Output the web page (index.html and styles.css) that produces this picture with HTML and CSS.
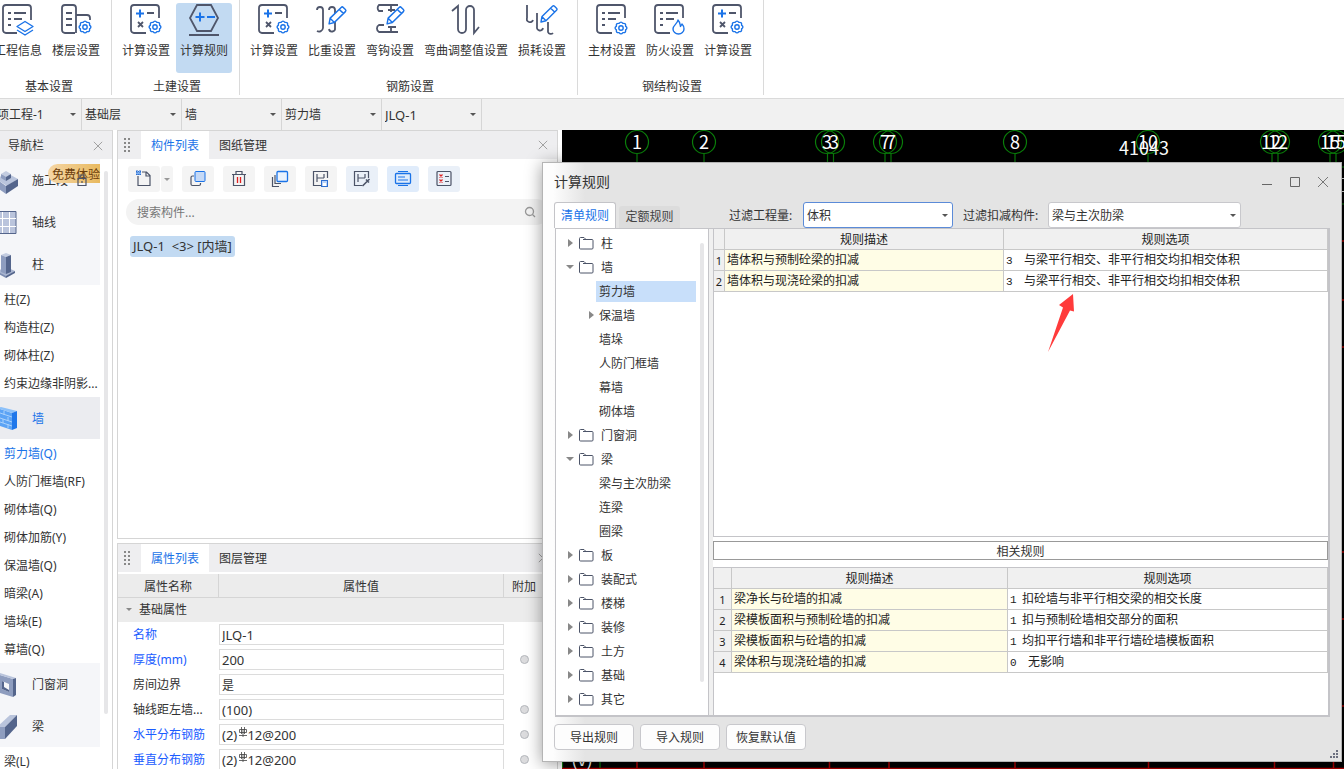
FILE: index.html
```html
<!DOCTYPE html>
<html lang="zh-CN">
<head>
<meta charset="utf-8">
<title>计算规则</title>
<link rel="stylesheet" href="styles.css">
</head>
<body>
<svg class="sprite" aria-hidden="true">
  <defs>
    <symbol id="gear" viewBox="-7 -7 14 14" overflow="visible"><g class="b"><path d="M4.6-1.9Q7.2 0 4.6 1.9 5.1 5.1 1.9 4.6 0 7.2-1.9 4.6-5.1 5.1-4.6 1.9-7.2 0-4.6-1.9-5.1-5.1-1.9-4.6 0-7.2 1.9-4.6 5.1-5.1 4.6-1.9z"/><circle r="2.2"/></g></symbol>
    <symbol id="pencil" viewBox="0 0 20 20"><g class="b"><path class="w" d="M2 18l1-5.500L13.500 2.300q1-1 2 0l2 2q1 1 0 2L7 16.700zM3 12.700l4 4M11.700 4.200l4.200 4"/></g></symbol>
    <symbol id="i-info" viewBox="0 0 32 32"><g class="d"><path d="M15 29H4a3 3 0 0 1-3-3V4a3 3 0 0 1 3-3h22a3 3 0 0 1 3 3v12M6 9h3M12 9h12M6 15h3M12 15h8M6 21h3"/></g><g class="b"><path d="M15 22.500l8-5 8 5-8 5zM15 26l8 5 8-5"/></g></symbol>
    <symbol id="i-floor" viewBox="0 0 32 32"><g class="d"><path d="M15 29H5a3 3 0 0 1-3-3V4a3 3 0 0 1 3-3h8a3 3 0 0 1 3 3v25M16 11h11a3 3 0 0 1 3 3v2M6 9h6M6 15h6M6 21h6"/></g><circle cx="25" cy="23" r="8" fill="#fff"/><use href="#gear" x="18" y="16" width="14" height="14"/></symbol>
    <symbol id="i-calc" viewBox="0 0 32 32"><g class="d"><path d="M16 29H4a3 3 0 0 1-3-3V4a3 3 0 0 1 3-3h22a3 3 0 0 1 3 3v10M17 9h7M8 18l5 5M13 18l-5 5"/></g><path class="plus" d="M10 5.500v8M6 9.500h8"/><use href="#gear" x="18" y="16" width="14" height="14"/></symbol>
    <symbol id="i-rule" viewBox="0 0 32 32"><g class="d"><path d="M9 1h14l7 13-7 13H9L2 14zM1 31h30"/></g><path class="plus" d="M12 8.500v9M7.500 13h9M19 13h8"/></symbol>
    <symbol id="i-weight" viewBox="0 0 32 32"><g class="d"><path d="M1 6a3 3 0 0 1 6 0v18a4 4 0 0 1-6 3M13 6a3 3 0 0 1 6 0v18a3 3 0 0 1-6 1"/></g><use href="#pencil" x="11" y="1" width="21" height="21"/></symbol>
    <symbol id="i-hook" viewBox="0 0 32 32"><g class="d"><path d="M24 1H5a4 4 0 0 0 0 6h4M17 2v6M14 6h7M24 28H5a4 4 0 0 1 0-7h5M17 28v-5M14 23h8"/></g><use href="#pencil" x="11" y="1" width="21" height="21"/></symbol>
    <symbol id="i-bend" viewBox="0 0 32 32"><g class="d"><path d="M2 7l6-5v23a4 4 0 0 0 8 0V6a4 4 0 0 1 8 0v23l5-6"/></g></symbol>
    <symbol id="i-loss" viewBox="0 0 32 32"><g class="d"><path d="M1 1v13a3 3 0 0 0 6 2M11 9v14a3 3 0 0 0 6 1M22 18v10a3 3 0 0 0 5 1"/></g><use href="#pencil" x="13" y="0" width="20" height="20"/></symbol>
    <symbol id="i-material" viewBox="0 0 32 32"><g class="d"><path d="M16 29H4a3 3 0 0 1-3-3V4a3 3 0 0 1 3-3h22a3 3 0 0 1 3 3v10M6 9h3M12 9h12M6 15h3M12 15h8M6 21h3"/></g><use href="#gear" x="18" y="17" width="14" height="14"/></symbol>
    <symbol id="i-fire" viewBox="0 0 32 32"><g class="d"><path d="M16 29H4a3 3 0 0 1-3-3V4a3 3 0 0 1 3-3h22a3 3 0 0 1 3 3v10M6 9h3M12 9h12M6 15h3M12 15h8M6 21h3"/></g><g class="b"><path d="M24 16c-.5 4-5 5-5 9a5.500 5 0 0 0 11 0c0-2-1-4-2-5l-1.500 2.500C26 20 26 18 24 16z"/></g></symbol>
    <symbol id="i-close" viewBox="0 0 12 12"><path d="M1 1l10 10M11 1L1 11" fill="none" stroke="currentColor" stroke-width="1.100"/></symbol>
    <symbol id="i-grip" viewBox="0 0 8 14"><path d="M0 1h2M4 1h2M0 5h2M4 5h2M0 9h2M4 9h2M0 13h2M4 13h2" stroke="#888" stroke-width="2"/></symbol>
    <symbol id="i-folder" viewBox="0 0 15 13"><path d="M.5 11V1.500q0-1 1-1H5L7 2.500h6q1 0 1 1V11q0 1-1 1H1.500q-1 0-1-1zM7 2.500H4" fill="none" stroke="#4c5468"/></symbol>
    <symbol id="i-rebar" viewBox="0 0 10 10"><path d="M3.500 0v7M6.500 0v7M5 2v8M1 8.500h8M1.500 2.500h7v3h-7z" fill="none" stroke="#444" stroke-width=".8"/></symbol>
    <symbol id="t-new" viewBox="0 0 18 18"><path d="M3 6v9.500h12V5.500L11.500 2H7M11 2v4h4" class="t"/><path d="M1 1h5v4H1z" fill="#7fb0ee"/><path d="M1 1.500h5M1 4.500h5M2 0v5M5 0v5" stroke="#2f6fd0" stroke-dasharray="1 1"/></symbol>
    <symbol id="t-copy" viewBox="0 0 18 18"><path d="M5 6H3.500Q2 6 2 7.500V14q0 1.500 1.500 1.500H10q1.500 0 1.500-1.500v-1" class="t"/><rect x="6" y="1.500" width="10" height="10" rx="1" fill="#c5d9f6" stroke="#1a73e8"/></symbol>
    <symbol id="t-trash" viewBox="0 0 18 18"><path d="M2 4.500h14M6 4V1.500h6V4M3.500 5v10.500h11V5" class="t"/><path d="M7.500 7v6M10.500 7v6" stroke="#e02020" stroke-width="1.300"/></symbol>
    <symbol id="t-layers" viewBox="0 0 18 18"><path d="M1.500 7v9.500H8M4 5v8.500h6" class="t"/><rect x="6" y="1.500" width="10.500" height="10" rx="1" fill="#eaf2fd" stroke="#1a73e8" stroke-width="1.300"/></symbol>
    <symbol id="t-save" viewBox="0 0 18 18"><path d="M9 15.500H1.500v-14h14V8M5 4v8M5 8h7M12 4v4" class="t"/><rect x="9.500" y="10.500" width="6" height="6" fill="#b9d4fa" stroke="#2f6fd0"/><path d="M11 13h3v3h-3z" fill="#fff"/></symbol>
    <symbol id="t-pick" viewBox="0 0 18 18"><path d="M9 15.500H1.500v-14h14V8M5 4v8M5 8h7M12 4v4" class="t"/><path d="M9.500 16l5-5M13 9.500l3 3M14.500 11l2-2" stroke="#4c5468" stroke-width="1.600"/></symbol>
    <symbol id="t-list" viewBox="0 0 18 18"><rect x="1.500" y="3.500" width="15" height="10" rx="1" fill="none" stroke="#1a73e8" stroke-width="1.300"/><path d="M4 7h7M4 10h10M4 1.500h10M4 15.500h10" stroke="#1a73e8"/></symbol>
    <symbol id="t-check" viewBox="0 0 18 18"><rect x="2" y="1.500" width="14" height="14" rx="1" class="t"/><path d="M10 6.500h4M10 11.500h4" class="t"/><path d="M4.500 4.500l3 3M7.500 4.500l-3 3M4.500 9.500l3 3M7.500 9.500l-3 3" stroke="#e02020" stroke-width="1.200"/></symbol>
  </defs>
</svg>

<div class="app">
  <header class="ribbon">
    <section class="group">
      <div class="tools">
        <button class="tool"><svg><use href="#i-info"/></svg>工程信息</button>
        <button class="tool"><svg><use href="#i-floor"/></svg>楼层设置</button>
      </div>
      <h2>基本设置</h2>
    </section>
    <section class="group">
      <div class="tools">
        <button class="tool"><svg><use href="#i-calc"/></svg>计算设置</button>
        <button class="tool active"><svg><use href="#i-rule"/></svg>计算规则</button>
      </div>
      <h2>土建设置</h2>
    </section>
    <section class="group">
      <div class="tools">
        <button class="tool"><svg><use href="#i-calc"/></svg>计算设置</button>
        <button class="tool"><svg><use href="#i-weight"/></svg>比重设置</button>
        <button class="tool"><svg><use href="#i-hook"/></svg>弯钩设置</button>
        <button class="tool wide"><svg><use href="#i-bend"/></svg>弯曲调整值设置</button>
        <button class="tool"><svg><use href="#i-loss"/></svg>损耗设置</button>
      </div>
      <h2>钢筋设置</h2>
    </section>
    <section class="group">
      <div class="tools">
        <button class="tool"><svg><use href="#i-material"/></svg>主材设置</button>
        <button class="tool"><svg><use href="#i-fire"/></svg>防火设置</button>
        <button class="tool"><svg><use href="#i-calc"/></svg>计算设置</button>
      </div>
      <h2>钢结构设置</h2>
    </section>
  </header>

  <nav class="pathbar">
    <span class="combo"><select aria-label="工程"><option>单项工程-1</option></select></span>
    <span class="combo"><select aria-label="楼层"><option>基础层</option></select></span>
    <span class="combo"><select aria-label="构件大类"><option>墙</option></select></span>
    <span class="combo"><select aria-label="构件类型"><option>剪力墙</option></select></span>
    <span class="combo"><select class="latin" aria-label="构件"><option>JLQ-1</option></select></span>
  </nav>

  <main class="workspace">
    <aside class="nav">
      <div class="nav-head">导航栏<button class="close" aria-label="关闭"><svg><use href="#i-close"/></svg></button></div>
      <div class="nav-body">
        <ul class="nav-list">
          <li class="cat"><svg viewBox="0 0 20 28"><path d="M-4 12l11-6 11 6-11 7z" fill="#b9c4dc"/><path d="M-4 12l10 7v8L-4 20z" fill="#8e9dbf"/><path d="M6 19l12-7v7L6 27z" fill="#54658c"/><path d="M1 7l5-3 5 3-5 3z" fill="#c3cce0"/><path d="M1 7l5 3v4l-5-3z" fill="#8e9dbf"/><path d="M6 10l5-3v4l-5 3z" fill="#54658c"/></svg>施工段
            <span class="trial">免费体验</span>
            <svg class="lock" viewBox="0 0 10 12"><path d="M1 4.500h8v7H1zM3 4V1h4v3M5 7v2" fill="none" stroke="#4c5468" stroke-width="1.200"/></svg></li>
          <li class="cat"><svg viewBox="0 0 20 28"><path d="M-2 2.500h18v22H-2z" fill="#bac4dc" stroke="#54658c"/><path d="M2.500 3v21M9.500 3v21M0 9.500h16M0 17.500h16" stroke="#fff"/></svg>轴线</li>
          <li class="cat"><svg viewBox="0 0 20 28"><path d="M-3 20l9-4 9 4-9 6z" fill="#a9b5d0"/><path d="M6 25l9-5v2l-9 5z" fill="#54658c"/><path d="M-3 20l9 5v2l-9-5z" fill="#7d8db2"/><path d="M1 4l5-2 5 2-5 2z" fill="#c3cce0"/><path d="M1 4l5 2v17l-5-2z" fill="#8e9dbf"/><path d="M6 6l5-2v17l-5 2z" fill="#54658c"/></svg>柱</li>
          <li>柱(Z)</li>
          <li>构造柱(Z)</li>
          <li>砌体柱(Z)</li>
          <li>约束边缘非阴影...</li>
          <li class="cat current"><svg viewBox="0 0 20 28"><path d="M-3 3l15 5v17L-3 20z" fill="#5ba3f5"/><path d="M-3 3l4-1 16 4-5 2z" fill="#8cc1fa"/><path d="M12 8l5-2v17l-5 2z" fill="#1f77ea"/><path d="M-3 7l15 5M-3 12l15 5M-3 16l15 5M4 6v4M8 12v4M3 14v4M8 19v4" stroke="#a9d1fb" fill="none"/></svg>墙</li>
          <li class="picked">剪力墙(Q)</li>
          <li>人防门框墙(RF)</li>
          <li>砌体墙(Q)</li>
          <li>砌体加筋(Y)</li>
          <li>保温墙(Q)</li>
          <li>暗梁(A)</li>
          <li>墙垛(E)</li>
          <li>幕墙(Q)</li>
          <li class="cat"><svg viewBox="0 0 20 28"><path d="M-3 3l16 5v18l-16-5zM2 10v8l7 3v-8z" fill="#8e9dbf" fill-rule="evenodd"/><path d="M-3 3l3-1 16 5-3 1z" fill="#b9c4dc"/><path d="M13 8l3-1v17l-3 2z" fill="#54658c"/><path d="M2 10l2 1v5l5 3v2l-7-3z" fill="#54658c"/></svg>门窗洞</li>
          <li class="cat"><svg viewBox="0 0 20 28"><path d="M-3 14L10 2h7L5 14z" fill="#b9c4dc"/><path d="M-3 14h8v12h-8z" fill="#8e9dbf"/><path d="M5 14L17 2v11L5 26z" fill="#54658c"/></svg>梁</li>
          <li>梁(L)</li>
        </ul>
        <div class="scroll"></div>
      </div>
    </aside>

    <div class="docks">
      <section class="panel grow">
        <div class="tabs">
          <svg class="grip"><use href="#i-grip"/></svg>
          <button class="tab on">构件列表</button><button class="tab">图纸管理</button>
          <button class="close" aria-label="关闭"><svg><use href="#i-close"/></svg></button>
        </div>
        <div class="toolbar">
          <span class="split"><button aria-label="新建"><svg><use href="#t-new"/></svg></button><button class="drop" aria-label="更多"></button></span>
          <button aria-label="复制"><svg><use href="#t-copy"/></svg></button>
          <button aria-label="删除"><svg><use href="#t-trash"/></svg></button>
          <button aria-label="层间复制"><svg><use href="#t-layers"/></svg></button>
          <button aria-label="存盘"><svg><use href="#t-save"/></svg></button>
          <button class="lit" aria-label="提取"><svg><use href="#t-pick"/></svg></button>
          <button class="hot" aria-label="列表"><svg><use href="#t-list"/></svg></button>
          <button class="lit" aria-label="检查"><svg><use href="#t-check"/></svg></button>
        </div>
        <div class="search">
          <input type="text" placeholder="搜索构件..." aria-label="搜索构件">
          <svg viewBox="0 0 12 12"><circle cx="5.500" cy="5.500" r="4" fill="none" stroke="#999" stroke-width="1.300"/><path d="M8.500 8.500L11 11" stroke="#999" stroke-width="1.300"/></svg>
        </div>
        <span class="component">JLQ-1&nbsp; &lt;3&gt; [内墙]</span>
      </section>

      <section class="panel props">
        <div class="tabs">
          <svg class="grip"><use href="#i-grip"/></svg>
          <button class="tab on">属性列表</button><button class="tab">图层管理</button>
          <button class="close" aria-label="关闭"><svg><use href="#i-close"/></svg></button>
        </div>
        <table class="ptable">
          <colgroup><col class="c-name"><col><col class="c-add"></colgroup>
          <thead><tr><th>属性名称</th><th>属性值</th><th>附加</th></tr></thead>
          <tbody>
            <tr class="section"><td colspan="3">基础属性</td></tr>
            <tr><td class="key"><label for="p1">名称</label></td><td><input type="text" id="p1" value="JLQ-1"></td><td></td></tr>
            <tr><td class="key"><label for="p2">厚度(mm)</label></td><td><input type="text" id="p2" value="200"></td><td><input type="radio" aria-label="附加厚度"></td></tr>
            <tr><td><label for="p3">房间边界</label></td><td><input type="text" class="han" id="p3" value="是"></td><td></td></tr>
            <tr><td><label for="p4">轴线距左墙...</label></td><td><input type="text" id="p4" value="(100)"></td><td><input type="radio" aria-label="附加轴线距"></td></tr>
            <tr><td class="key"><label for="p5">水平分布钢筋</label></td><td><input type="text" id="p5" value="(2)   12@200"><svg class="rebar"><use href="#i-rebar"/></svg></td><td><input type="radio" aria-label="附加水平钢筋"></td></tr>
            <tr><td class="key"><label for="p6">垂直分布钢筋</label></td><td><input type="text" id="p6" value="(2)   12@200"><svg class="rebar"><use href="#i-rebar"/></svg></td><td><input type="radio" aria-label="附加垂直钢筋"></td></tr>
          </tbody>
        </table>
      </section>
    </div>

    <div class="canvas">
      <svg>
        <g transform="translate(-562 -130)">
          <g class="axis">
            <circle cx="637" cy="142" r="11.500"/><circle cx="704" cy="142" r="11.500"/>
            <circle cx="827" cy="142" r="11.500"/><circle cx="833" cy="142" r="11.500"/>
            <circle cx="885" cy="142" r="11.500"/><circle cx="891" cy="142" r="11.500"/>
            <circle cx="1015" cy="142" r="11.500"/><circle cx="1148" cy="142" r="11.500"/>
            <circle cx="1272" cy="142" r="11.500"/><circle cx="1278" cy="142" r="11.500"/>
            <circle cx="1330" cy="142" r="11.500"/><circle cx="1336" cy="142" r="11.500"/>
            <path d="M637 154v9M704 154v9M827.500 154v9M833.500 154v9M885 154v9M891 154v9M1015 154v9M1148 154v9M1272 154v9M1278 154v9M1330 154v9M1336 154v9M562.500 761v8M600 761v8M1342 167h2M1342 204h2"/>
          </g>
          <path class="beam" d="M637 761v8M704 761v8M829.500 761v8M889 761v8M1015 761v8M1148.500 761v8M1274.500 761v8M1333.500 761v8M562 768.500h782M1342 241h2M1342 300h2M1342 347h2M1342 552h2M1342 619h2M1342 706h2"/>
          <path class="wall" d="M1342 178.500h2M1342 191.500h2"/>
          <g class="marks">
            <text x="637" y="149">1</text><text x="704" y="149">2</text>
            <text x="827" y="149">3</text><text x="834" y="149">3</text>
            <text x="885" y="149">7</text><text x="891" y="149">7</text>
            <text x="1015" y="149">8</text><text x="1148" y="149">10</text><text x="1144" y="155">41043</text>
            <text x="1271" y="149">12</text><text x="1278" y="149">12</text>
            <text x="1330" y="149">15</text><text x="1336" y="149">15</text>
            <text x="582" y="766">(v)</text>
          </g>
        </g>
      </svg>
    </div>
  </main>
</div>

<section class="dialog" role="dialog" aria-labelledby="dlg-title">
  <header class="titlebar">
    <h1 id="dlg-title">计算规则</h1>
    <button aria-label="最小化"><svg viewBox="0 0 12 12"><path d="M1 8.500h10" stroke="#666"/></svg></button>
    <button aria-label="最大化"><svg viewBox="0 0 12 12"><path d="M1.500 1.500h9v9h-9z" fill="none" stroke="#666"/></svg></button>
    <button aria-label="关闭"><svg viewBox="0 0 12 12"><path d="M1 1l10 10M11 1L1 11" stroke="#777"/></svg></button>
  </header>
  <div class="filters">
    <button class="rtab on">清单规则</button><button class="rtab">定额规则</button>
    <label class="f1" for="qty">过滤工程量:</label>
    <span class="pick focus"><select id="qty"><option>体积</option></select></span>
    <label class="f2" for="comp">过滤扣减构件:</label>
    <span class="pick long"><select id="comp"><option>梁与主次肋梁</option></select></span>
  </div>
  <div class="frame">
    <div class="tree">
      <ul>
        <li><i class="shut"></i><svg><use href="#i-folder"/></svg>柱</li>
        <li><i class="open"></i><svg><use href="#i-folder"/></svg>墙</li>
        <li class="sub"><span class="sel">剪力墙</span></li>
        <li class="sub"><i class="shut"></i>保温墙</li>
        <li class="sub">墙垛</li>
        <li class="sub">人防门框墙</li>
        <li class="sub">幕墙</li>
        <li class="sub">砌体墙</li>
        <li><i class="shut"></i><svg><use href="#i-folder"/></svg>门窗洞</li>
        <li><i class="open"></i><svg><use href="#i-folder"/></svg>梁</li>
        <li class="sub">梁与主次肋梁</li>
        <li class="sub">连梁</li>
        <li class="sub">圈梁</li>
        <li><i class="shut"></i><svg><use href="#i-folder"/></svg>板</li>
        <li><i class="shut"></i><svg><use href="#i-folder"/></svg>装配式</li>
        <li><i class="shut"></i><svg><use href="#i-folder"/></svg>楼梯</li>
        <li><i class="shut"></i><svg><use href="#i-folder"/></svg>装修</li>
        <li><i class="shut"></i><svg><use href="#i-folder"/></svg>土方</li>
        <li><i class="shut"></i><svg><use href="#i-folder"/></svg>基础</li>
        <li><i class="shut"></i><svg><use href="#i-folder"/></svg>其它</li>
      </ul>
      <div class="scroll"></div>
    </div>
    <div class="rules">
      <div class="sheet top">
        <table>
          <colgroup><col class="n1"><col class="desc1"><col></colgroup>
          <thead><tr><th></th><th>规则描述</th><th>规则选项</th></tr></thead>
          <tbody>
            <tr><th>1</th><td>墙体积与预制砼梁的扣减</td><td><b>3</b>与梁平行相交、非平行相交均扣相交体积</td></tr>
            <tr><th>2</th><td>墙体积与现浇砼梁的扣减</td><td><b>3</b>与梁平行相交、非平行相交均扣相交体积</td></tr>
          </tbody>
        </table>
        <svg class="pointer" viewBox="0 0 28 60"><path d="M26 1l1 17.500-4-1L1 59 16 14.500 12 12z" fill="#ff3b3b"/></svg>
      </div>
      <div class="related">相关规则</div>
      <div class="sheet bottom">
        <table>
          <colgroup><col class="n2"><col class="desc2"><col></colgroup>
          <thead><tr><th></th><th>规则描述</th><th>规则选项</th></tr></thead>
          <tbody>
            <tr><th>1</th><td>梁净长与砼墙的扣减</td><td><b class="near">1</b>扣砼墙与非平行相交梁的相交长度</td></tr>
            <tr><th>2</th><td>梁模板面积与预制砼墙的扣减</td><td><b class="near">1</b>扣与预制砼墙相交部分的面积</td></tr>
            <tr><th>3</th><td>梁模板面积与砼墙的扣减</td><td><b class="near">1</b>均扣平行墙和非平行墙砼墙模板面积</td></tr>
            <tr><th>4</th><td>梁体积与现浇砼墙的扣减</td><td><b>0</b>无影响</td></tr>
          </tbody>
        </table>
      </div>
    </div>
  </div>
  <footer class="actions">
    <button>导出规则</button><button>导入规则</button><button>恢复默认值</button>
    <svg class="resize" viewBox="0 0 8 8"><path d="M6 1h2M3 4h2M6 4h2M0 7h2M3 7h2M6 7h2" stroke="#6b7080" stroke-width="2"/></svg>
  </footer>
</section>
</body>
</html>
```
FILE: styles.css
```css
* { box-sizing: border-box; }
body, button, input, select {
  font-family: "Noto Sans", "Noto Sans CJK SC", sans-serif;
  font-size: 12px;
  line-height: 16px;
  color: #333;
}
body { margin: 0; background: #fff; overflow: hidden; }
button { border: 0; padding: 0; background: none; }
ul { list-style: none; margin: 0; padding: 0; }
h1, h2 { margin: 0; font-weight: 400; }
.sprite { position: absolute; width: 0; height: 0; }

.app { display: flex; flex-direction: column; height: 100vh; overflow: hidden; }

/* ribbon */
.ribbon { display: flex; flex: none; padding-bottom: 3px; border-bottom: 1px solid #dadada; margin-left: -16px; }
.group { padding: 3px 7px 0 6px; border-right: 1px solid #dadada; }
.group h2 { font-size: 12px; text-align: center; margin: 6px 0 0 4px; }
.tools { display: flex; gap: 2px; }
.tool { display: flex; flex-direction: column; align-items: center; gap: 7px; width: 56px; height: 70px; padding-top: 1px; border-radius: 3px; white-space: nowrap; }
.tool.wide { width: 92px; }
.tool.active { background: #c2daf2; }
.tool svg { width: 32px; height: 32px; flex: none; }
.d { fill: none; stroke: #4f566b; stroke-width: 1.8; }
.b { fill: none; stroke: #1a73e8; stroke-width: 1.4; stroke-linejoin: round; }
.w { fill: #fff; }
.t { fill: none; stroke: #4c5468; stroke-width: 1.2; }
.plus { fill: none; stroke: #1a73e8; stroke-width: 2; }

/* path bar */
.pathbar { display: flex; flex: none; height: 31px; padding-right: 8px; margin-left: -18px; background: #f1f1f1; }
.combo { position: relative; width: 100px; border-right: 1px solid #d6d6d6; }
.combo select { width: 100%; height: 31px; padding: 0 0 0 3px; border: 0; background: none; appearance: none; }
.combo .latin { font-size: 13px; }
.combo::after, .pick::after, .drop::after {
  content: ""; position: absolute; right: 5px; top: 14px;
  border: 3px solid transparent; border-top-color: #555; border-bottom: 0;
}

/* workspace */
.workspace { flex: 1; min-height: 0; display: grid; grid-template-columns: 113px 441px 1fr; column-gap: 4px; }
.nav { border-right: 1px solid #d5d5d5; border-top: 1px solid #dadada; overflow: hidden; }
.nav-head { display: flex; align-items: center; justify-content: space-between; height: 28px; padding: 2px 9px 0 8px; background: #eeeef0; }
.close { display: flex; color: #999; }
.close svg { width: 10px; height: 10px; }
.nav-body { display: flex; gap: 4px; }
.nav-list { width: 100px; flex: none; }
.nav-list li { height: 28px; padding: 1px 0 0 4px; line-height: 28px; white-space: nowrap; }
.nav-list .cat { position: relative; display: flex; align-items: center; gap: 12px; height: 42px; padding: 2px 0 0; background: #f5f6f9; }
.cat svg { width: 20px; height: 28px; flex: none; }
.nav-list .current { background: #ebecf0; color: #1a73e8; }
.picked { color: #1a73e8; }
.trial { position: absolute; left: 48px; right: 0; top: 5px; height: 19px; padding-left: 4px; line-height: 21px; border-radius: 10px 0 0 10px; background: linear-gradient(90deg, #f5d6a6, #e8b95f); color: #6b3d0c; }
.cat .lock { position: absolute; left: 77px; top: 15px; width: 10px; height: 12px; }
.scroll { width: 4px; border-radius: 2px; background: #e6e6e8; }
.nav-body .scroll { height: 543px; margin-top: 12px; }

.docks { display: flex; flex-direction: column; gap: 4px; min-height: 0; }
.panel { border: 1px solid #d5d5d5; overflow: hidden; }
.grow { flex: 1; }
.props { height: 226px; flex: none; border-bottom: 0; }
.tabs { display: flex; align-items: stretch; height: 28px; padding: 0 9px 0 6px; background: #eeeef0; }
.grip { width: 8px; height: 14px; margin: 7px 9px 0 0; }
.tab { padding: 2px 10px 0; }
.tab.on { background: #fff; color: #1a73e8; }
.tabs .close { align-items: center; margin-left: auto; }

.toolbar { display: flex; gap: 9px; padding: 7px 10px; }
.toolbar button { display: flex; align-items: center; justify-content: center; width: 32px; height: 26px; border-radius: 3px; background: #f4f4f4; }
.toolbar svg { width: 18px; height: 18px; }
.toolbar .lit { background: #eaf0f8; }
.toolbar .hot { background: #e0ecfb; }
.split { display: flex; gap: 1px; }
.toolbar .drop { position: relative; width: 12px; }
.toolbar .drop::after { right: 3px; top: 12px; border-top-color: #999; }
.search { display: flex; align-items: center; height: 26px; margin: 0 8px; padding: 0 12px 0 11px; border-radius: 13px; background: #f3f3f3; }
.search input { flex: 1; border: 0; padding: 2px 0 0; background: none; outline: 0; }
.search input::placeholder { color: #777; }
.search svg { width: 12px; height: 12px; margin-right: 1px; }
.component { display: inline-block; margin: 11px 12px; padding: 0 3px; font-size: 13px; line-height: 21px; border-radius: 3px; background: #c2daf2; }

.ptable { width: 426px; margin-top: 2px; border-collapse: separate; border-spacing: 0; table-layout: fixed; }
.c-name { width: 101px; }
.c-add { width: 40px; }
.ptable th { height: 24px; padding: 2px 0 0; font-weight: 400; background: #ececec; border-right: 1px solid #d5d5d5; border-bottom: 1px solid #d5d5d5; }
.ptable th:last-child { border-right: 0; }
.ptable td { position: relative; height: 25px; padding: 0 0 0 15px; white-space: nowrap; }
.ptable td + td { padding: 0; }
.ptable td:last-child { text-align: center; }
.ptable .section td { height: 24px; padding-left: 21px; text-align: left; background: #ececec; }
.section td::before { content: ""; position: absolute; left: 8px; top: 10px; border: 3px solid transparent; border-top-color: #888; border-bottom: 0; }
.key { color: #1a5cff; }
.key label { color: inherit; }
.ptable label { display: block; padding-top: 1px; }
.ptable input[type="text"] { display: block; width: 100%; height: 21px; padding: 0 2px; border: 1px solid #dcdcdc; font-size: 13px; }
.ptable .han[type="text"] { font-size: 12px; }
.ptable input[type="radio"] { appearance: none; display: block; width: 9px; height: 9px; margin: 0 auto; border: 1px solid #b5b8bd; border-radius: 50%; background: #dcdcde; }
.rebar { position: absolute; left: 19px; top: 5px; width: 10px; height: 10px; }

.canvas { background: #000; overflow: hidden; }
.canvas svg { display: block; width: 100%; height: 100%; }
.axis { fill: none; stroke: #0a7d0a; stroke-width: 1.2; }
.beam { fill: none; stroke: #b00000; stroke-width: 1.5; }
.wall { stroke: #ddd; }
.marks { fill: #fff; font-family: "Noto Sans CJK SC", sans-serif; font-size: 18px; text-anchor: middle; }

/* dialog */
.dialog {
  position: absolute; left: 542px; right: 2px; top: 162px; bottom: 7px;
  display: flex; flex-direction: column;
  border: 1px solid #b4b4b4;
  background: linear-gradient(90deg, #fdfdfd 10px, #e4e4e4 42px);
  box-shadow: 0 2px 16px rgba(0, 0, 0, .4);
}
.titlebar { display: flex; align-items: center; gap: 16px; height: 38px; padding: 0 12px 0 11px; }
.titlebar h1 { flex: 1; font-size: 14px; }
.titlebar button { display: flex; }
.titlebar svg { width: 12px; height: 12px; }
.filters { display: flex; align-items: center; height: 27px; padding-left: 11px; }
.rtab { align-self: flex-end; height: 22px; width: 61px; margin-left: 3px; color: #444; background: #dcdcdc; border-radius: 3px 3px 0 0; }
.rtab.on { height: 26px; width: 62px; margin: 0; padding-top: 1px; color: #1a73e8; background: #fff; border: 1px solid #c4c4c8; border-bottom: 0; }
.f1, .f2 { padding-top: 2px; white-space: nowrap; }
.f1 { margin: 0 10px 0 49px; width: 64px; }
.f2 { margin: 0 10px; width: 75px; }
.pick { position: relative; width: 150px; }
.pick.long { width: 193px; }
.pick select { display: block; width: 100%; height: 26px; padding: 2px 3px 0; border: 1px solid #c8c8cc; border-radius: 3px; background: #fff; appearance: none; }
.pick.focus select { border-color: #5b8bd8; }
.pick::after { top: 12px; right: 5px; }

.frame { flex: 1; min-height: 0; display: flex; gap: 4px; margin: 0 11px 0 12px; border: 1px solid #c4c4c8; border-width: 1px 2px 2px 1px; background: #f0f0f0; }
.tree { display: flex; justify-content: space-between; width: 153px; flex: none; padding: 2px 4px 0 0; border-right: 1px solid #c4c4c8; background: #fff; overflow: hidden; }
.tree ul { flex: 1; }
.tree li { display: flex; align-items: center; height: 24px; padding: 2px 0 0 10px; white-space: nowrap; }
.tree li svg { width: 15px; height: 13px; margin: -2px 7px 0 5px; }
.tree i { flex: none; width: 8px; margin-top: -2px; display: flex; }
.tree i::before { content: ""; border: 4px solid transparent; }
.tree .shut::before { border-left-color: #888; border-right: 0; border-width: 4px 0 4px 5px; margin-left: 2px; }
.tree .open::before { border-top-color: #888; border-bottom: 0; }
.tree .sub { padding-left: 43px; }
.tree .sub i { margin-left: -12px; width: 12px; }
.sel { width: 100px; margin: -2px 0 0 -3px; padding-left: 3px; line-height: 21px; background: #c8dffa; }
.tree .scroll { height: 439px; margin-top: 12px; }

.rules { flex: 1; min-width: 0; display: flex; flex-direction: column; background: #fff; }
.sheet { position: relative; border-left: 1px solid #c4c4c8; }
.sheet.top { flex: 1; border-bottom: 1px solid #c4c4c8; }
.sheet.bottom { height: 148px; margin-top: 7px; border-top: 1px solid #c4c4c8; }
.related { height: 19px; margin-top: 4px; line-height: 19px; text-align: center; border: 1px solid #999; }
.sheet table { width: 100%; table-layout: fixed; border-collapse: separate; border-spacing: 0; }
.n1 { width: 11px; }
.n2 { width: 18px; }
.desc1 { width: 279px; }
.desc2 { width: 276px; }
.sheet th, .sheet td { height: 21px; padding: 0; font-weight: 400; line-height: 16px; border-right: 1px solid #c8c8c8; border-bottom: 1px solid #c8c8c8; white-space: nowrap; color: #222; }
.sheet th { padding-top: 2px; background: #f0f0f0; }
.sheet tbody th { font-size: 11px; }
.sheet td { padding-left: 2px; }
.sheet tbody th + td { background: #fffde6; }
.sheet b { display: inline-block; width: 18px; font: 11px/16px "Liberation Mono", monospace; }
.sheet .near { width: 12px; }
.pointer { position: absolute; left: 333px; top: 64px; width: 28px; height: 60px; }

.actions { display: flex; gap: 6px; padding: 7px 12px 11px 11px; }
.actions button { width: 80px; height: 26px; padding-top: 2px; border: 1px solid #c8c8cc; border-radius: 4px; background: #fdfdfd; }
.resize { position: absolute; right: 3px; bottom: 3px; width: 8px; height: 8px; }
```
